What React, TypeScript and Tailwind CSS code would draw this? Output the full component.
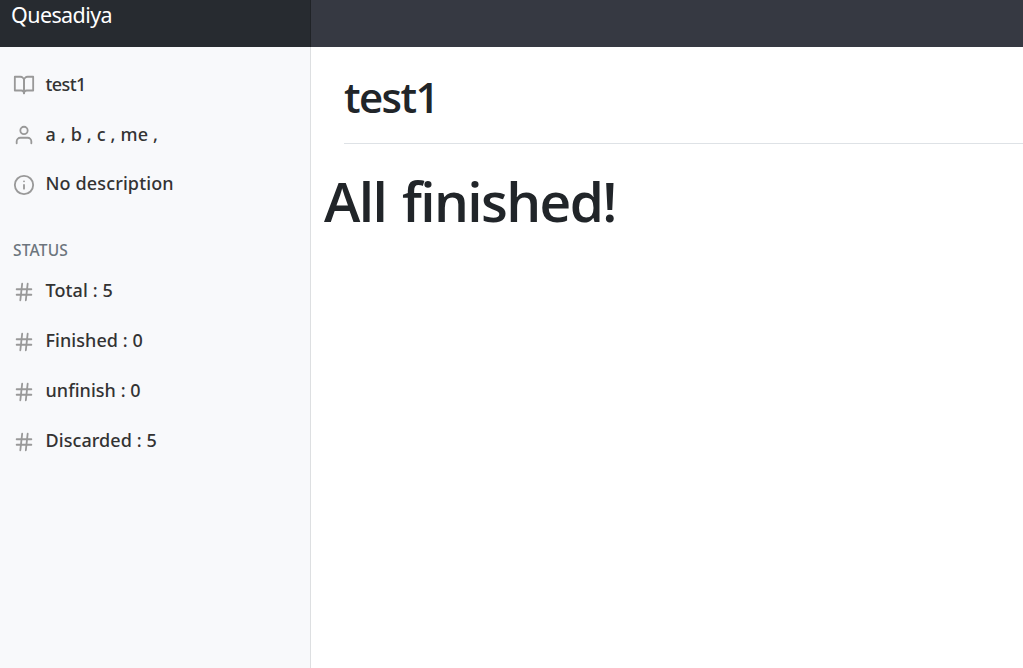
import React from "react";

const Icon = ({ children, offset = "mt-[2px]" }: { children: React.ReactNode; offset?: string }) => (
  <svg className={`h-[22px] w-[22px] shrink-0 ${offset}`} viewBox="0 0 24 24" fill="none" stroke="#999999" strokeWidth="2" strokeLinecap="round" strokeLinejoin="round">
    {children}
  </svg>
);

const Book = () => (
  <Icon>
    <path d="M2 3h6a4 4 0 0 1 4 4v14a3 3 0 0 0-3-3H2z" />
    <path d="M22 3h-6a4 4 0 0 0-4 4v14a3 3 0 0 1 3-3h7z" />
  </Icon>
);

const User = () => (
  <Icon>
    <path d="M20 21v-2a4 4 0 0 0-4-4H8a4 4 0 0 0-4 4v2" />
    <circle cx="12" cy="7" r="4" />
  </Icon>
);

const Info = () => (
  <Icon>
    <circle cx="12" cy="12" r="10" />
    <path d="M12 16v-4M12 8h.01" />
  </Icon>
);

const Hash = () => (
  <Icon offset="mt-[4px]">
    <path d="M4 9h16M4 15h16M10 3 8 21M16 3l-2 18" />
  </Icon>
);

const Row = ({ icon, text, tracking }: { icon: React.ReactNode; text: string; tracking: string }) => (
  <li className="flex h-[50px] items-center gap-[10.5px] pl-[13px]">
    {icon}
    <span className={`whitespace-pre text-[18px] leading-[26px] font-medium text-[#333333] ${tracking}`}>{text}</span>
  </li>
);

export default function App() {
  return (
    <div className="flex h-[668px] w-full flex-col overflow-hidden bg-white font-['Noto_Sans','Open_Sans',sans-serif] text-[#212529]">
      <header className="flex h-[47px] shrink-0 bg-[#343a40]">
        <div className="w-[311px] border-r border-[#202327] bg-[#272b30] pl-[11px] text-[21.5px] leading-[30px] text-white">
          <span className="tracking-[-0.6px]">Quesadiya</span>
        </div>
        <div className="flex-1 bg-[#363942]" />
      </header>
      <div className="flex min-h-0 flex-1">
        <nav className="w-[311px] shrink-0 border-r border-[#dddfe1] bg-[#f8f9fb] pt-[12px]">
          <ul>
            <Row icon={<Book />} text="test1" tracking="tracking-[-0.6px]" />
            <Row icon={<User />} text="a , b , c , me ," tracking="tracking-[0.16px]" />
            <Row icon={<Info />} text="No description" tracking="mb-[2px] tracking-[0.13px]" />
          </ul>
          <h6 className="mt-[31px] pl-[13px] text-[15.5px] leading-[21px] font-medium tracking-[0.2px] text-[#6c757d]">STATUS</h6>
          <ul className="mt-[4px]">
            <Row icon={<Hash />} text="Total : 5" tracking="tracking-[0.1px]" />
            <Row icon={<Hash />} text="Finished : 0" tracking="tracking-[0.07px]" />
            <Row icon={<Hash />} text="unfinish : 0" tracking="tracking-[0.05px]" />
            <Row icon={<Hash />} text="Discarded : 5" tracking="tracking-[0.07px]" />
          </ul>
        </nav>
        <main className="flex-1 font-['Open_Sans','Noto_Sans',sans-serif]">
          <div className="ml-[33px] h-[97px] border-b border-[#dee2e6] pt-[24px]">
            <h1 className="text-[42px] leading-[51px] font-semibold tracking-[-1.6px]">test1</h1>
          </div>
          <h2 className="ml-[13px] mt-[24px] text-[55px] leading-[65px] font-semibold tracking-[-1.6px] [word-spacing:3px]">All finished!</h2>
        </main>
      </div>
    </div>
  );
}
